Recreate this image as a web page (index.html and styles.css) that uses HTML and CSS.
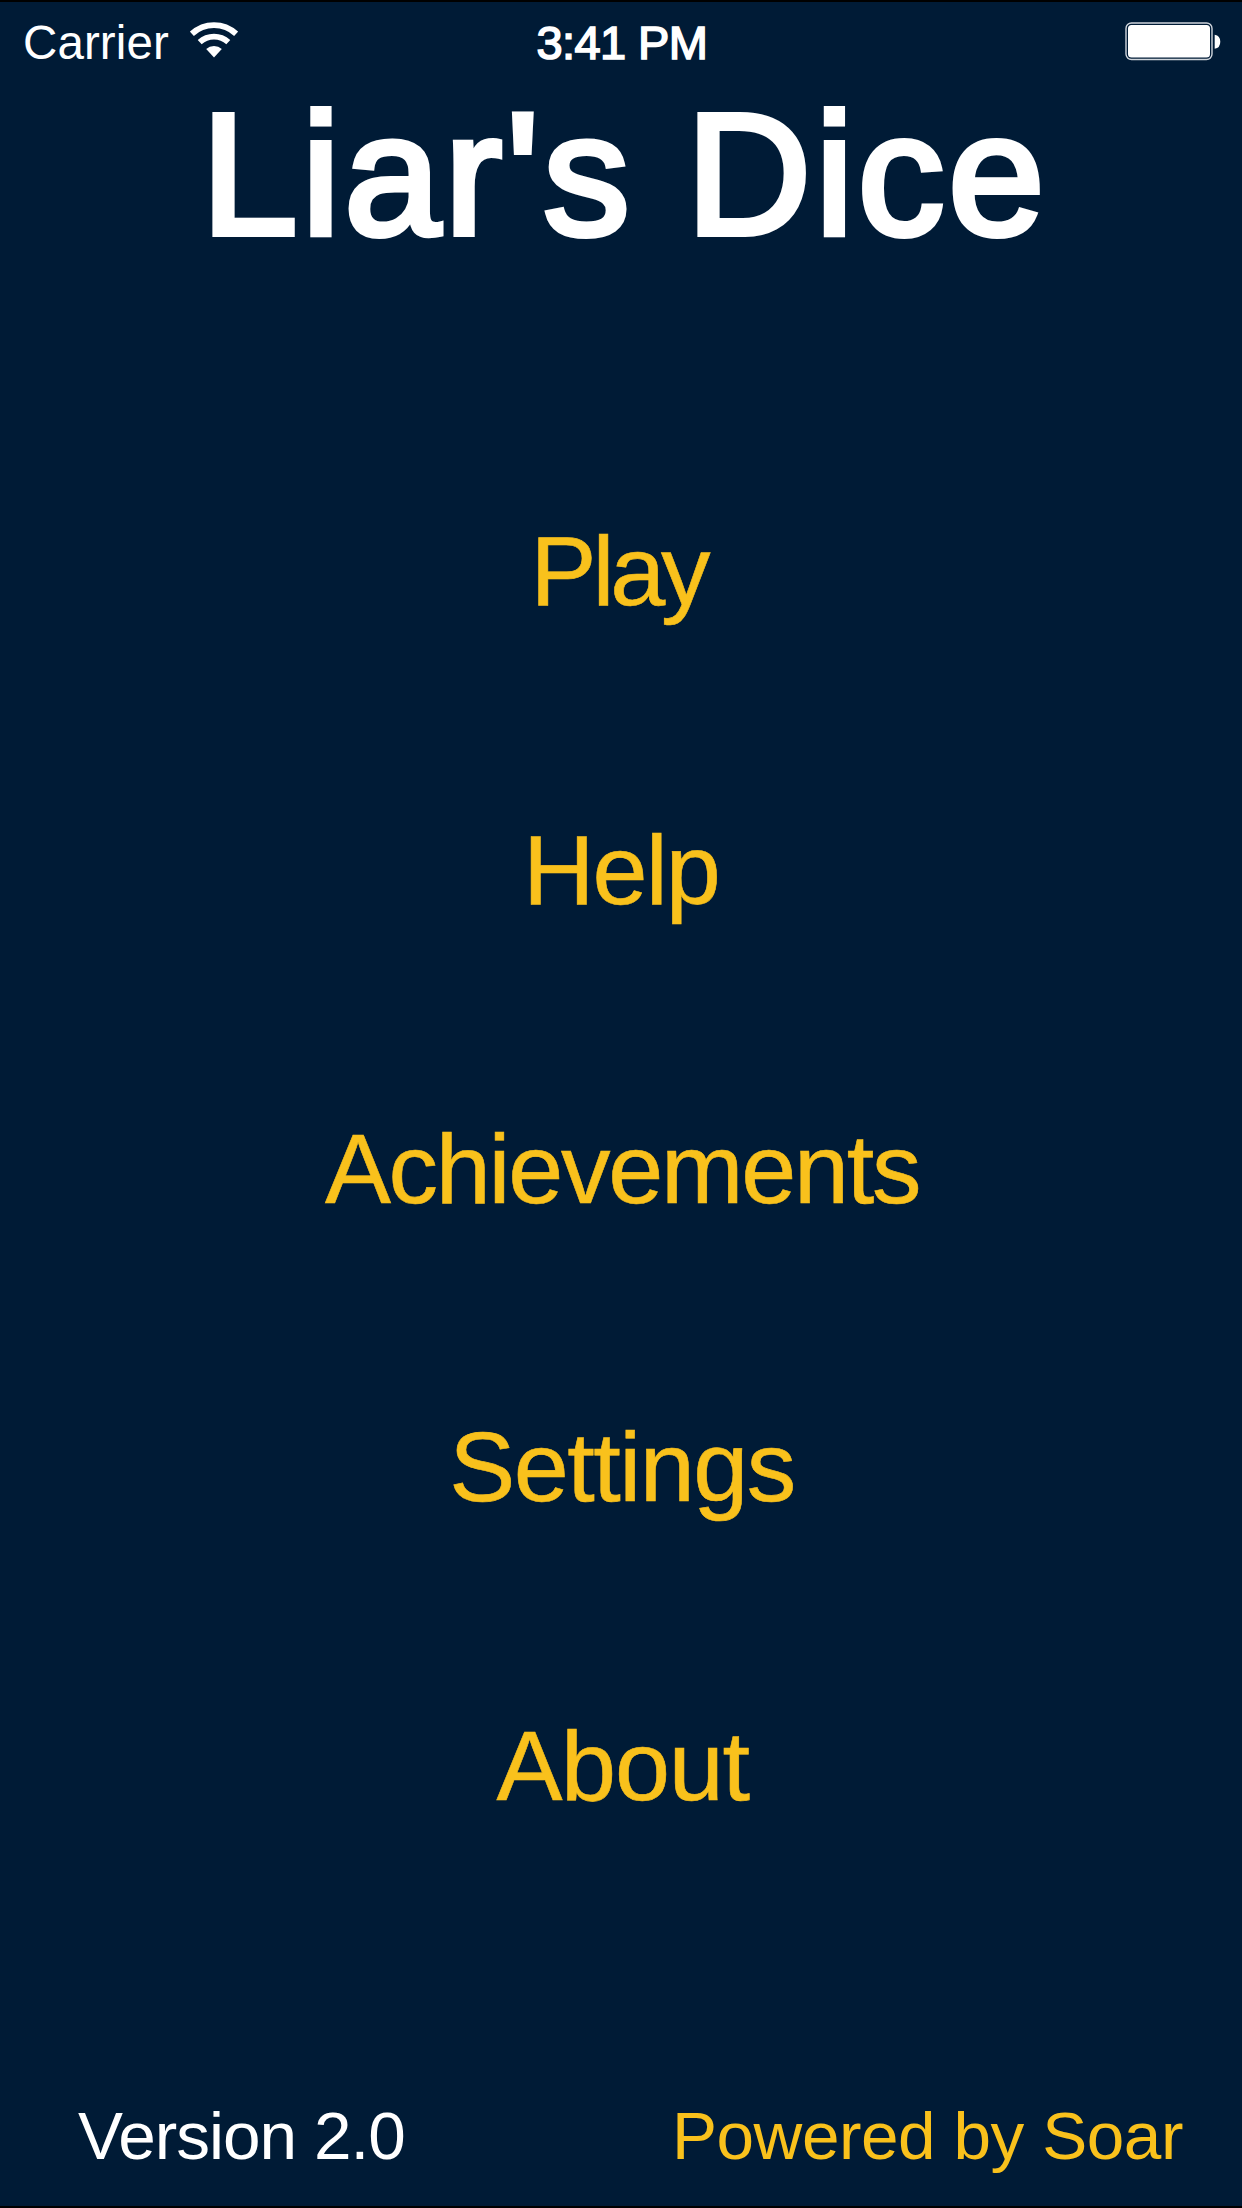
FILE: index.html
```html
<!DOCTYPE html>
<html lang="en">
<head>
<meta charset="utf-8">
<title>Liar's Dice</title>
<link rel="stylesheet" href="styles.css">
</head>
<body>
<header class="status">
  <div class="network"><span class="carrier">Carrier</span>
    <svg class="wifi" viewBox="0 0 48 36" width="48" height="36"><g fill="none" stroke="#fff" stroke-width="5.800"><path d="M1.900 11.800A32.500 32.500 0 0 1 46.100 11.800M9.700 20.200A21 21 0 0 1 38.300 20.200"/></g><path d="M24 35.500L16.200 27.100A11.500 11.500 0 0 1 31.800 27.100z" fill="#fff"/></svg>
  </div>
  <time class="clock">3:41 PM</time>
  <svg class="battery" viewBox="0 0 96 40" width="96" height="40"><rect x="1" y="2" width="86" height="36.500" rx="5.500" fill="none" stroke="#cfd5dc" stroke-width="1.400"/><rect x="3" y="4" width="82" height="32.500" rx="3.500" fill="#fff"/><path d="M89.700 13.700q5.600 1 5.600 7t-5.600 7z" fill="#fff"/></svg>
</header>
<h1 class="title">Liar's Dice</h1>
<nav class="menu">
  <a class="item play">Play</a>
  <a class="item help">Help</a>
  <a class="item achievements">Achievements</a>
  <a class="item settings">Settings</a>
  <a class="item about">About</a>
</nav>
<footer class="footer"><span class="version">Version 2.0</span><a class="powered">Powered by Soar</a></footer>
</body>
</html>
```
FILE: styles.css
```css
* { box-sizing: border-box; }
body {
  margin: 0;
  height: 2208px;
  display: flex;
  flex-direction: column;
  overflow: hidden;
  border: solid #000;
  border-width: 2px 0;
  background: #001b36;
  color: #fff;
  font-family: "Liberation Sans", Arial, sans-serif;
}
.status {
  height: 80px;
  display: grid;
  grid-template-columns: 1fr auto 1fr;
  align-items: center;
  padding: 0 21px 0 23px;
}
.network { display: flex; align-items: center; gap: 21.500px; }
.carrier { font-size: 47.500px; letter-spacing: 0.100px; }
.wifi { margin-bottom: 4px; }
.clock {
  font-size: 47px;
  letter-spacing: -0.600px;
  -webkit-text-stroke: 1.600px #fff;
}
.battery { justify-self: end; margin-bottom: 2px; }
.title {
  margin: 0;
  height: 188px;
  padding-left: 8px;
  line-height: 185px;
  font-size: 173px;
  font-weight: normal;
  letter-spacing: 4.100px;
  -webkit-text-stroke: 6px #fff;
  text-align: center;
  white-space: nowrap;
}
.menu {
  height: 1645px;
  padding-top: 152px;
  display: flex;
  flex-direction: column;
  align-items: center;
}
.item {
  height: 298.750px;
  line-height: 298.750px;
  font-size: 99px;
  -webkit-text-stroke: 0.600px #f9c11c;
  color: #f9c11c;
}
.play { letter-spacing: -4.200px; padding-right: 5px; }
.help { letter-spacing: -1.900px; }
.achievements { letter-spacing: -2.300px; padding-left: 2px; }
.settings { letter-spacing: -1.500px; padding-left: 2px; }
.about { letter-spacing: -1.300px; padding-left: 3px; }
.footer {
  margin-top: auto;
  height: 142px;
  line-height: 143px;
  padding: 0 59px 0 78px;
  display: flex;
  justify-content: space-between;
  font-size: 67.500px;
}
.version { letter-spacing: -1px; }
.powered { letter-spacing: -0.450px; color: #f9c11c; }
```
